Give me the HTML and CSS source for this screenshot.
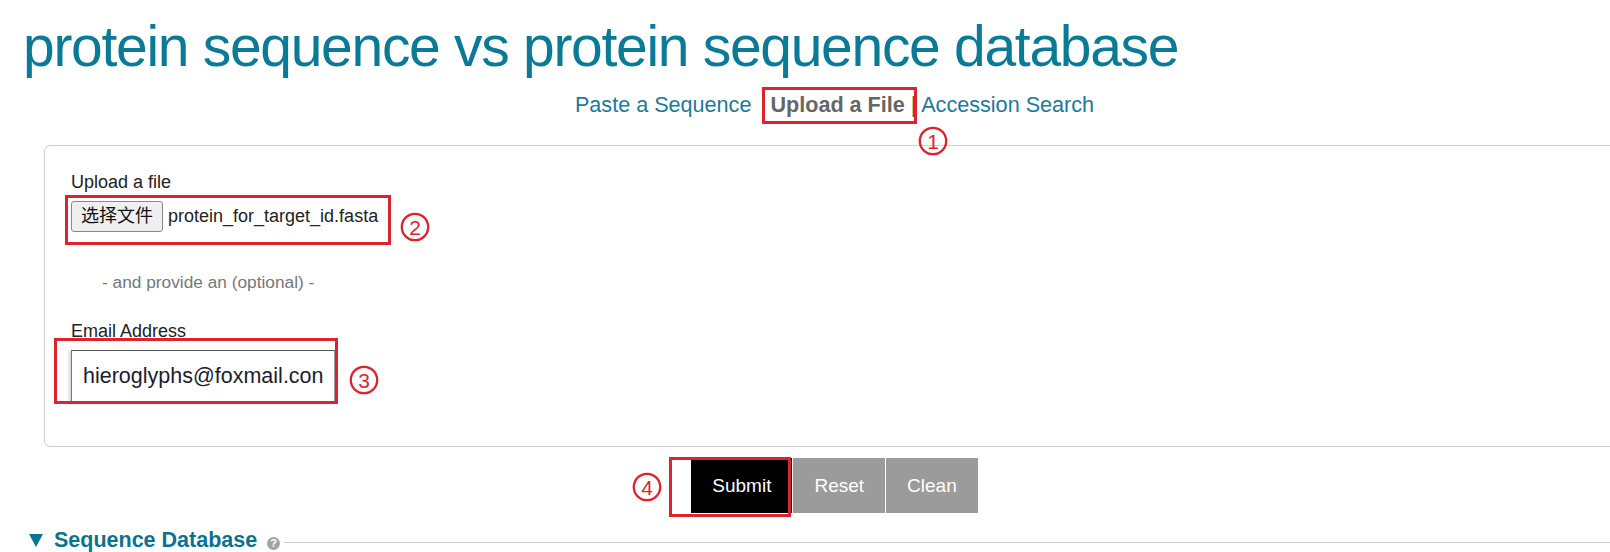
FILE: index.html
```html
<!DOCTYPE html>
<html lang="en">
<head>
<meta charset="utf-8">
<title>protein sequence vs protein sequence database</title>
<link rel="stylesheet" href="styles.css">
</head>
<body>
<div class="page">
  <h1 class="title">protein sequence vs protein sequence database</h1>
  <div class="main">
    <nav class="tabs"><a class="tab">Paste a Sequence</a><span class="tab active">Upload a File</span> <span class="sep">|</span> <a class="tab">Accession Search</a></nav>
    <div class="fs">
      <div class="label">Upload a file</div>
      <div class="file-row"><button class="file-btn" type="button">选择文件</button><span class="file-name">protein_for_target_id.fasta</span></div>
      <div class="optional">- and provide an (optional) -</div>
      <div class="label email-label">Email Address</div>
      <input class="email" type="text" value="hieroglyphs@foxmail.con">
    </div>
    <div class="actions">
      <button class="btn submit" type="button">Submit</button>
      <button class="btn" type="button">Reset</button>
      <button class="btn" type="button">Clean</button>
    </div>
  </div>
  <div class="section-head">
    <svg class="tri" width="14" height="13" viewBox="0 0 14 13"><polygon points="0,0 14,0 7,13" fill="#0b7491"/></svg>
    <span class="section-title">Sequence Database</span>
    <span class="help">?</span>
    <span class="rule"></span>
  </div>

  <div class="mark box1"></div>
  <div class="mark box2"></div>
  <div class="mark box3"></div>
  <div class="mark box4"></div>
  <svg class="num num1" width="30" height="30" viewBox="0 0 30 30"><circle cx="15" cy="15" r="13.2" fill="none" stroke="#dc2430" stroke-width="2.3"/><text x="15" y="22.5" text-anchor="middle" font-size="21" font-family="Liberation Sans, sans-serif" fill="#dc2430">1</text></svg>
  <svg class="num num2" width="30" height="30" viewBox="0 0 30 30"><circle cx="15" cy="15" r="13.2" fill="none" stroke="#dc2430" stroke-width="2.3"/><text x="15" y="22.5" text-anchor="middle" font-size="21" font-family="Liberation Sans, sans-serif" fill="#dc2430">2</text></svg>
  <svg class="num num3" width="30" height="30" viewBox="0 0 30 30"><circle cx="15" cy="15" r="13.2" fill="none" stroke="#dc2430" stroke-width="2.3"/><text x="15" y="22.5" text-anchor="middle" font-size="21" font-family="Liberation Sans, sans-serif" fill="#dc2430">3</text></svg>
  <svg class="num num4" width="30" height="30" viewBox="0 0 30 30"><circle cx="15" cy="15" r="13.2" fill="none" stroke="#dc2430" stroke-width="2.3"/><text x="15" y="22.5" text-anchor="middle" font-size="21" font-family="Liberation Sans, sans-serif" fill="#dc2430">4</text></svg>
</div>
</body>
</html>
```

FILE: styles.css
```css
html, body {
  margin: 0;
  padding: 0;
  overflow: hidden;
  background: #fff;
}
body {
  font-family: "Liberation Sans", Arial, sans-serif;
  color: #222;
}
.page {
  position: relative;
  width: 1602px;
  padding: 14px 0 0 23px;
}
.title {
  margin: 0;
  font-size: 57px;
  line-height: 65px;
  font-weight: normal;
  letter-spacing: -1.3px;
  color: #0a7a97;
  white-space: nowrap;
}
.main {
  margin-left: 21px;
  width: 1581px;
}
.tabs {
  margin-top: 13px;
  text-align: center;
  font-size: 21.6px;
  line-height: 26px;
  white-space: nowrap;
}
.tab {
  color: #1b7a99;
}
.tabs > .tab:first-child {
  margin-right: 19px;
}
.tab.active {
  color: #666;
  font-weight: bold;
}
.sep {
  color: #555;
}
.fs {
  margin-top: 27px;
  border: 1px solid #cfcfcf;
  border-radius: 6px;
  padding: 26px 0 44px 26px;
}
.label {
  font-size: 18px;
  line-height: 21px;
  color: #222;
}
.file-row {
  margin-top: 8px;
  display: flex;
  align-items: center;
  height: 31px;
}
.file-btn {
  height: 31px;
  padding: 0 9px;
  margin: 0;
  background: #efefef;
  border: 1px solid #8a8a8a;
  border-radius: 3px;
  font-family: "Liberation Sans", "Noto Sans CJK SC", sans-serif;
  font-size: 18px;
  line-height: 29px;
  color: #111;
}
.file-name {
  margin-left: 5px;
  font-size: 18px;
  color: #222;
}
.optional {
  margin-top: 40px;
  padding-left: 31px;
  font-size: 17.3px;
  line-height: 20px;
  color: #777;
}
.email-label {
  margin-top: 29px;
}
.email {
  display: block;
  margin-top: 8px;
  width: 264px;
  height: 52px;
  box-sizing: border-box;
  padding: 0 10px 0 11px;
  border: 1px solid #9a9a9a;
  border-top-color: #555;
  border-left-color: #777;
  box-shadow: -2px 1px 3px rgba(0, 0, 0, 0.18);
  font-family: "Liberation Sans", Arial, sans-serif;
  font-size: 21.5px;
  color: #1c1c2c;
  background: #fff;
  outline: none;
}
.actions {
  margin-top: 11px;
  display: flex;
  justify-content: center;
  gap: 1px;
}
.btn {
  height: 55px;
  padding: 0 21px;
  margin: 0;
  border: none;
  border-radius: 0;
  background: #9b9b9b;
  color: #fff;
  font-family: "Liberation Sans", Arial, sans-serif;
  font-size: 19px;
}
.btn.submit {
  background: #000;
}
.section-head {
  margin-top: 15px;
  display: flex;
  align-items: center;
  height: 24px;
}
.tri {
  margin-left: 6px;
  display: block;
}
.section-title {
  margin-left: 11px;
  font-size: 21.5px;
  line-height: 24px;
  font-weight: bold;
  color: #0b7290;
}
.help {
  margin-left: 10px;
  margin-top: 6px;
  width: 13px;
  height: 13px;
  border-radius: 50%;
  background: #a3a3a3;
  color: #fff;
  font-size: 11px;
  line-height: 13px;
  font-weight: bold;
  text-align: center;
}
.rule {
  flex: 1;
  height: 1px;
  margin-left: 4px;
  margin-top: 4px;
  background: #cccccc;
}
.mark {
  position: absolute;
  border: 3px solid #dc2430;
  box-sizing: border-box;
}
.box1 { left: 762px; top: 87px; width: 155px; height: 37px; }
.box2 { left: 65px; top: 195px; width: 326px; height: 50px; }
.box3 { left: 54px; top: 338px; width: 284px; height: 66px; }
.box4 { left: 669px; top: 457px; width: 122px; height: 60px; }
.num {
  position: absolute;
  display: block;
}
.num1 { left: 918px; top: 126px; }
.num2 { left: 400px; top: 212px; }
.num3 { left: 349px; top: 365px; }
.num4 { left: 632px; top: 472px; }
```
